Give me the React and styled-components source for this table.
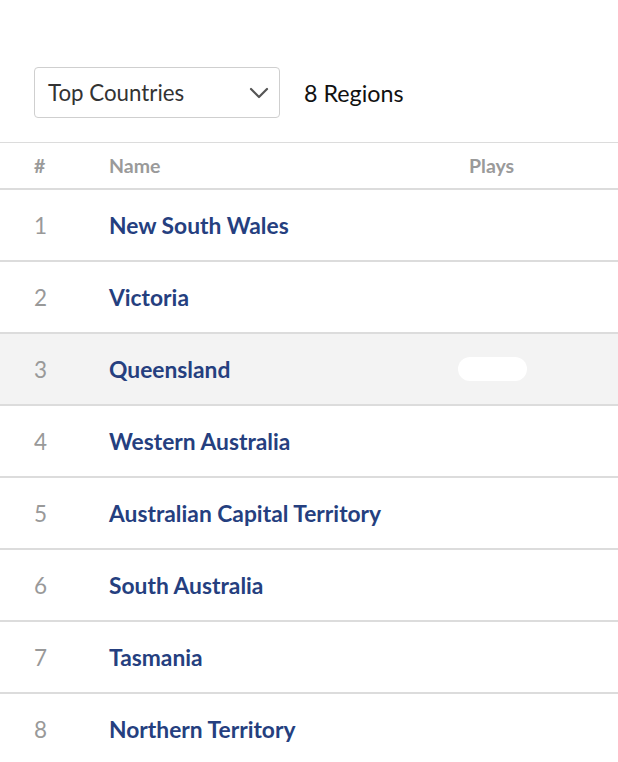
import React from 'react';
import styled, { createGlobalStyle } from 'styled-components';

const GlobalStyle = createGlobalStyle`
  body {
    margin: 0;
    background: #fff;
    font-family: Lato, "Open Sans", sans-serif;
  }
`;

const Page = styled.div`
  width: 618px;
  padding-top: 67px;
`;

const Toolbar = styled.div`
  display: flex;
  align-items: center;
  gap: 24px;
  padding: 0 34px;
  margin-bottom: 24px;
`;

const Select = styled.div`
  box-sizing: border-box;
  width: 246px;
  height: 51px;
  border: 1px solid #cfcfcf;
  border-radius: 4px;
  display: flex;
  align-items: center;
  justify-content: space-between;
  padding: 0 10px 0 13px;
  font-size: 22.3px;
  color: #333;
`;

const Count = styled.div`
  font-size: 23.3px;
  color: #111;
`;

const Table = styled.div`
  border-top: 1px solid #dcdcdc;
`;

const Row = styled.div`
  display: grid;
  grid-template-columns: 75px 360px 1fr;
  align-items: center;
  padding-left: 34px;
  height: ${({ $head }) => ($head ? '45px' : '70px')};
  border-bottom: 2px solid #dcdcdc;
  background: ${({ $active }) => ($active ? '#f3f3f3' : '#fff')};
`;

const HeadCell = styled.div`
  font-size: 19.5px;
  font-weight: 700;
  color: #9a9a9a;
`;

const Rank = styled.div`
  font-size: 22.5px;
  color: #999;
`;

const Name = styled.div`
  font-size: 22.8px;
  font-weight: 700;
  color: #253f7f;
`;

const Plays = styled.div`
  width: 69px;
  height: 24px;
  border-radius: 12px;
  background: ${({ $visible }) => ($visible ? '#fff' : 'transparent')};
  margin-left: -11px;
`;

const regions = [
  'New South Wales',
  'Victoria',
  'Queensland',
  'Western Australia',
  'Australian Capital Territory',
  'South Australia',
  'Tasmania',
  'Northern Territory',
];

const Chevron = () => (
  <svg width="20" height="12" viewBox="0 0 20 12" fill="none">
    <path d="M2 2l8 8 8-8" stroke="#555" strokeWidth="2.2" strokeLinecap="round" strokeLinejoin="round" />
  </svg>
);

export default function App() {
  return (
    <Page>
      <GlobalStyle />
      <Toolbar>
        <Select>
          <span>Top Countries</span>
          <Chevron />
        </Select>
        <Count>8 Regions</Count>
      </Toolbar>
      <Table>
        <Row $head>
          <HeadCell>#</HeadCell>
          <HeadCell>Name</HeadCell>
          <HeadCell>Plays</HeadCell>
        </Row>
        {regions.map((r, i) => (
          <Row key={r} $active={i === 2}>
            <Rank>{i + 1}</Rank>
            <Name>{r}</Name>
            <Plays $visible={i === 2} />
          </Row>
        ))}
      </Table>
    </Page>
  );
}
